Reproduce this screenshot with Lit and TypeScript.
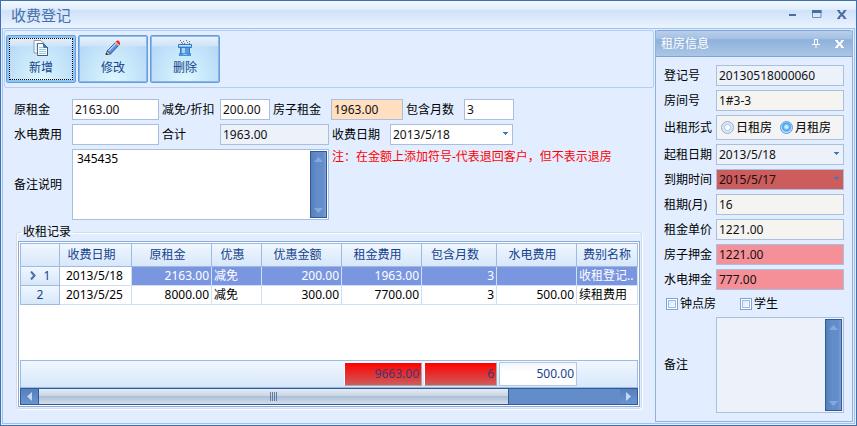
import { LitElement, html, css, svg } from "lit";
import { customElement } from "lit/decorators.js";
import { classMap } from "lit/directives/class-map.js";

interface FeeRecord {
  date: string;
  rent: string;
  kind: string;
  discount: string;
  fee: string;
  months: string;
  utility: string;
  category: string;
}

const records: FeeRecord[] = [
  { date: "2013/5/18", rent: "2163.00", kind: "减免", discount: "200.00", fee: "1963.00", months: "3", utility: "", category: "收租登记.." },
  { date: "2013/5/25", rent: "8000.00", kind: "减免", discount: "300.00", fee: "7700.00", months: "3", utility: "500.00", category: "续租费用" },
];

const columns = ["收费日期", "原租金", "优惠", "优惠金额", "租金费用", "包含月数", "水电费用", "费别名称"];

const addIcon = svg`
  <path d="M1 .5h7l3 3V13H1z" fill="#fff" stroke="#8a9bb5"/>
  <path d="M2.500 4h3M2.500 6h2M2.500 8h2M2.500 10h2" stroke="#9fd3f3"/>
  <path d="M4.500 3.500h6l4 4v8h-10z" fill="#fff" stroke="#5b6b85"/>
  <path d="M9.500 2.500l5 5.500h-4z" fill="#3f6fae"/>
  <path d="M14.500 7v8.500h-10" fill="none" stroke="#44597a"/>
  <path d="M6 7.500h4M6 9.500h7M6 11.500h7M6 13.500h7" stroke="#8ccdf2"/>`;

const editIcon = svg`
  <path d="M2 11L11.500 1.500l3 3L5.500 14z" fill="#5f8fe0" stroke="#34509a"/>
  <path d="M3.500 11L11.500 3" stroke="#b4d0fa" stroke-width="1.500"/>
  <path d="M11 1.500L12.500.5h1l1.500 2v1.500l-1 1z" fill="#f02818"/>
  <path d="M10.500 2l3.500 3.500" stroke="#f4c070" stroke-width="1.200"/>
  <path d="M2 11l-1 3.500h2L5.500 14z" fill="#e8d4b8" stroke="#4c4c58" stroke-width=".8"/>
  <path d="M.8 13h1.700v2H.8z" fill="#333"/>`;

const deleteIcon = svg`
  <path d="M3 .5h1M6 1.500h1M9 .5h1M12 1.500h1M4 2.500h1M7 3.500h1M10 2.500h1M12 3.500h1M5 3.500h1" stroke="#66717f"/>
  <path d="M1.500 4.500h13v3h-13z" fill="#7dbcf3" stroke="#3a78c2"/>
  <path d="M2 5.500h12" stroke="#c3e2fb"/>
  <path d="M3 8h10v5H3z" fill="#5c98e2"/>
  <path d="M3.500 8v5M12.500 8v5" stroke="#3f7ac6"/>
  <path d="M6.500 8v5" stroke="#a7d4fa" stroke-width="3"/>
  <path d="M2 13h12v3H2z" fill="#4c8fdc"/>
  <path d="M6 14.500h4" stroke="#56e4f4"/>`;

const shared = css`
  * {
    box-sizing: border-box;
  }
  button,
  input,
  select,
  textarea {
    font: inherit;
    color: inherit;
    margin: 0;
    outline: none;
  }
  .field {
    height: 21px;
    padding: 0 2px;
    border: 1px solid #a9bfde;
    border-radius: 0;
    background: #fff;
    color: #111;
    min-width: 0;
  }
  .combo {
    position: relative;
    display: flex;
  }
  .combo select {
    flex: 1;
    appearance: none;
  }
  .combo svg {
    position: absolute;
    right: 4px;
    top: 8px;
    pointer-events: none;
  }
  .readonly {
    background: #ecf1fa;
  }
`;

@customElement("memo-box")
export class MemoBox extends LitElement {
  static properties = {
    value: { type: String },
    label: { type: String },
    muted: { type: Boolean, reflect: true },
  };
  declare value: string;
  declare label: string;
  declare muted: boolean;

  constructor() {
    super();
    this.value = "";
    this.label = "";
    this.muted = false;
  }

  static styles = [
    shared,
    css`
      :host {
        display: flex;
        box-sizing: border-box;
        border: 1px solid #a9bfde;
        background: #fff;
        padding: 1px;
      }
      :host([muted]) {
        background: #ecf1fa;
      }
      textarea {
        flex: 1;
        min-width: 0;
        border: 0;
        padding: 0 3px;
        resize: none;
        background: transparent;
        line-height: 16px;
        overflow: hidden;
      }
      .bar {
        width: 17px;
        flex: none;
        display: flex;
        flex-direction: column;
        justify-content: space-between;
        border: 1px solid #2f5b9b;
        background: linear-gradient(90deg, #5580bb, #638dc9 40%, #638dc9 80%, #7ba0d4);
      }
      .bar button {
        height: 14px;
        padding: 0;
        border: 0;
        background: none;
        display: grid;
        place-items: center;
      }
    `,
  ];

  render() {
    return html`
      <textarea aria-label=${this.label} .value=${this.value}></textarea>
      <div class="bar">
        <button aria-label="向上">
          <svg width="9" height="5" viewBox="0 0 9 5"><path d="M0 5L4.500 0 9 5z" fill="#84a9de" /></svg>
        </button>
        <button aria-label="向下">
          <svg width="9" height="5" viewBox="0 0 9 5"><path d="M0 0L4.500 5 9 0z" fill="#84a9de" /></svg>
        </button>
      </div>
    `;
  }
}

@customElement("app-root")
export class AppRoot extends LitElement {
  static styles = [
    shared,
    css`
      :host {
        display: flex;
        flex-direction: column;
        box-sizing: border-box;
        min-height: 100vh;
        border: 1px solid #3f70b0;
        background: #e2eeff;
        color: #000;
        font: 12px/16px "Noto Sans", "Noto Sans CJK SC", sans-serif;
      }
      .titlebar {
        display: flex;
        align-items: center;
        height: 27px;
        padding: 0 9px 0 10px;
        background: linear-gradient(#f2f8ff, #e2eefc 30%, #cfe2f9 36%, #deebfc 70%, #eaf4ff);
      }
      .titlebar h1 {
        flex: 1;
        margin: 0;
        font-size: 15px;
        line-height: 20px;
        font-weight: 400;
        color: #4470ac;
      }
      .caption {
        border: 0;
        padding: 0;
        background: none;
        display: flex;
      }
      .titlebar .caption {
        margin-left: 15px;
      }
      .content {
        flex: 1;
        display: flex;
        gap: 1px;
        margin: 0 1px 1px;
        padding: 1px;
        border: 1px solid #9fc3ee;
      }
      main {
        flex: 1;
        min-width: 0;
        display: flex;
        flex-direction: column;
      }
      .toolbar {
        display: flex;
        gap: 2px;
        padding: 4px 1px;
        border: 1px solid #b3cff3;
        border-radius: 2px;
      }
      .tool {
        width: 70px;
        height: 48px;
        padding: 2px;
        border: 1px solid #669bdc;
        border-radius: 2px;
        box-shadow: inset 0 0 0 1px #8cb7ea;
        color: #15428b;
        background:
          linear-gradient(#e9f3fd, #cfe3f8 22%, transparent 23%),
          radial-gradient(ellipse at 50% 100%, #dcf8ff, #b4d7f6 90%);
      }
      .tool .face {
        display: flex;
        flex-direction: column;
        align-items: center;
        gap: 4px;
        height: 42px;
        padding-top: 1px;
        border: 1px solid transparent;
      }
      .tool.focused {
        box-shadow: inset 0 0 0 2px #8cc5f2;
      }
      .tool.focused .face {
        border: 1px dotted #000;
      }
      .form {
        display: grid;
        gap: 4px;
        padding: 11px 10px 0;
      }
      .row {
        display: flex;
        align-items: center;
        gap: 3px;
      }
      .pair {
        display: flex;
        align-items: center;
      }
      .pair label,
      .pair .caption-text {
        width: 58px;
        flex: none;
      }
      .w50 {
        width: 50px;
      }
      .w72 {
        width: 72px;
      }
      .w87 {
        width: 87px;
      }
      .w109 {
        width: 109px;
      }
      .w123 {
        width: 123px;
      }
      .peach {
        background: #ffdfbf;
      }
      .row.top {
        align-items: flex-start;
      }
      .memo {
        width: 257px;
        height: 71px;
      }
      .note {
        margin: 0;
        color: #f00;
      }
      .records {
        min-width: 0;
        margin: 4px 12px 0;
        padding: 1px;
        border: 1px solid #d2dce8;
        border-radius: 3px;
        box-shadow: inset 1px 1px #fff, 1px 1px #fff;
      }
      .records legend {
        margin-left: 3px;
        padding: 0 2px;
      }
      .grid {
        border: 1px solid #8babd6;
        padding: 1px;
        background: #fff;
      }
      table {
        width: 100%;
        table-layout: fixed;
        border-collapse: separate;
        border-spacing: 0;
      }
      .c40 {
        width: 40px;
      }
      .c50 {
        width: 50px;
      }
      .c72 {
        width: 72px;
      }
      .c75 {
        width: 75px;
      }
      .c80 {
        width: 80px;
      }
      th,
      td {
        padding: 0 2px;
        font-weight: 400;
        white-space: nowrap;
        overflow: hidden;
        border: solid #cfe0f5;
        border-width: 0 1px 1px 0;
      }
      th {
        color: #15428b;
        text-align: center;
        border-color: #9ebbdf;
        background: linear-gradient(#f0f7ff, #d7e7fa);
      }
      thead th {
        height: 24px;
        border-top-width: 1px;
        padding-right: 10px;
      }
      thead th:last-child {
        padding-right: 2px;
      }
      th:first-child {
        border-left-width: 1px;
      }
      tbody th,
      tbody td {
        height: 19px;
        line-height: 18px;
      }
      .num {
        text-align: right;
      }
      .day {
        padding-left: 6px;
      }
      .selected td {
        color: #fff;
        background: #7b96e0;
      }
      .selected .day {
        color: #000;
        background: #fff;
      }
      .pointer {
        margin-right: 8px;
      }
      .blank td {
        height: 55px;
        border: 0;
      }
      tfoot td {
        height: 28px;
        padding: 1px 0 1px 2px;
        border: solid #9ebbdf;
        border-width: 1px 0;
        background: linear-gradient(#f0f7ff, #d7e7fa);
      }
      tfoot td:first-child {
        border-left-width: 1px;
      }
      tfoot td:last-child {
        border-right-width: 1px;
      }
      .sum {
        display: block;
        padding: 3px 2px;
        text-align: right;
        color: #15428b;
        border: 1px solid #b3c6e2;
        background: linear-gradient(#f0f5fc, #fff 40%);
      }
      .sum.red {
        color: #3a3a78;
        border-color: #fff #a8a8a8 #a8a8a8 #fff;
        background: linear-gradient(#f00, #cd5c5c);
      }
      .scroll {
        display: flex;
        height: 17px;
        border: 1px solid #2f5b9b;
        background: #638dc9;
      }
      .scroll button {
        width: 17px;
        padding: 0;
        border: 0;
        background: linear-gradient(#5580bb, #6b95cf);
        display: grid;
        place-items: center;
      }
      .track {
        flex: 1;
        display: flex;
      }
      .thumb {
        width: 81%;
        display: grid;
        place-items: center;
        border: solid #2f5b9b;
        border-width: 0 1px;
        background: linear-gradient(#e4ebf3, #cbd6e4 45%, #adc0d9 50%, #d3deea);
      }
      aside {
        width: 198px;
        flex: none;
        display: flex;
        flex-direction: column;
        border: 1px solid #8fb2dd;
        border-top: 0;
      }
      .panel-head {
        display: flex;
        align-items: center;
        gap: 15px;
        height: 27px;
        padding: 0 8px 0 5px;
        border-top: 1px solid #7fa5d5;
        border-bottom: 1px solid #7fa5d5;
        border-radius: 2px 2px 0 0;
        background: linear-gradient(#b9cfea, #a4c1e4 30%, #8eb0da 35%, #abc7e7);
      }
      .panel-head h2 {
        flex: 1;
        margin: 0;
        font-size: 12px;
        font-weight: 400;
        color: #fff;
      }
      .details {
        display: grid;
        grid-template-columns: 48px minmax(0, 1fr);
        gap: 4px;
        padding: 8px 8px 0;
        align-items: center;
      }
      .details .field {
        width: 100%;
      }
      .cream {
        background: #f5f4f0;
      }
      .pink {
        background: #f69098;
      }
      .crimson {
        background: #cd5c5c;
      }
      .radios {
        display: flex;
        align-items: center;
        gap: 8px;
        height: 25px;
        margin: 0;
        padding: 0 4px;
        border: 1px solid #a9bfde;
        background: #f4f4f4;
      }
      .choice {
        display: flex;
        align-items: center;
        gap: 2px;
        white-space: nowrap;
      }
      .choice input {
        appearance: none;
        flex: none;
        width: 12px;
        height: 12px;
        border: 1px solid #79a4dc;
      }
      .choice input[type="radio"] {
        width: 13px;
        height: 13px;
        border-color: #93abc9;
        border-radius: 50%;
        background: radial-gradient(circle, #fff 25%, #b7cff0 35%, #e2edfb 65%);
      }
      .choice input[type="radio"]:checked {
        border-color: #5a9be0;
        background: radial-gradient(circle at 50% 45%, #c9f1ff 15%, #3b9cf0 45%, #c5e2fa 65%);
      }
      .choice input[type="checkbox"] {
        background: linear-gradient(135deg, #d7e3f3, #fff);
        box-shadow: inset 0 0 0 1px #fff, inset 0 0 0 2px #9dbbe2;
      }
      .checks {
        grid-column: 1 / -1;
        display: grid;
        grid-template-columns: 74px 1fr;
        height: 19px;
        padding-left: 2px;
        align-items: center;
      }
      .side-memo {
        height: 96px;
      }
    `,
  ];

  private arrow() {
    return html`<svg width="7" height="5" viewBox="0 0 7 5"><path d="M1 0h5v1H5v1H4v1H3V2H2V1H1z" fill="#3f7ab8" /></svg>`;
  }

  private tool(label: string, icon: unknown, focused = false) {
    return html`<button class=${classMap({ tool: true, focused })}>
      <span class="face"><svg width="16" height="16" viewBox="0 0 16 16" fill="none">${icon}</svg>${label}</span>
    </button>`;
  }

  private text(id: string, label: string, value: string, cls: string) {
    return html`<div class="pair"><label for=${id}>${label}</label><input id=${id} class="field ${cls}" .value=${value} /></div>`;
  }

  private detail(id: string, label: string, value: string, cls: string) {
    return html`<label for=${id}>${label}</label><input id=${id} class="field ${cls}" .value=${value} />`;
  }

  private detailDate(id: string, label: string, value: string, cls: string) {
    return html`<label for=${id}>${label}</label>
      <span class="combo"><select id=${id} class="field ${cls}"><option>${value}</option></select>${this.arrow()}</span>`;
  }

  private record(r: FeeRecord, i: number) {
    return html`<tr class=${classMap({ selected: i === 0 })}>
      <th scope="row">${i === 0
        ? html`<svg class="pointer" width="6" height="9" viewBox="0 0 6 9"><path d="M1 .5l3.500 4L1 8.500" fill="none" stroke="#4a6da3" stroke-width="2" /></svg>`
        : ""}${i + 1}</th>
      <td class="day">${r.date}</td>
      <td class="num">${r.rent}</td>
      <td>${r.kind}</td>
      <td class="num">${r.discount}</td>
      <td class="num">${r.fee}</td>
      <td class="num">${r.months}</td>
      <td class="num">${r.utility}</td>
      <td>${r.category}</td>
    </tr>`;
  }

  render() {
    return html`
      <header class="titlebar">
        <h1>收费登记</h1>
        <button class="caption" aria-label="最小化">
          <svg width="9" height="9" viewBox="0 0 9 9"><path d="M1 4h7v2H1z" fill="#4a6da3" /></svg>
        </button>
        <button class="caption" aria-label="最大化">
          <svg width="10" height="9" viewBox="0 0 10 9"><path d="M.5.500h8.500v7H.5z" fill="none" stroke="#6f8fbe" /><path d="M0 0h9.500v3H0z" fill="#4a6da3" /></svg>
        </button>
        <button class="caption" aria-label="关闭">
          <svg width="10" height="9" viewBox="0 0 10 9"><path d="M1.500 1l6.500 7M8 1L1.500 8" stroke="#4a6da3" stroke-width="2" /><path d="M0 .5h3M6.500.5h3M0 8.500h3M6.500 8.500h3" stroke="#4a6da3" /></svg>
        </button>
      </header>
      <div class="content">
        <main>
          <div class="toolbar">
            ${this.tool("新增", addIcon, true)} ${this.tool("修改", editIcon)} ${this.tool("删除", deleteIcon)}
          </div>
          <form class="form">
            <div class="row">
              ${this.text("rent", "原租金", "2163.00", "w87")}
              ${this.text("discount", "减免/折扣", "200.00", "w50")}
              ${this.text("roomRent", "房子租金", "1963.00", "w72 peach")}
              ${this.text("months", "包含月数", "3", "w50")}
            </div>
            <div class="row">
              ${this.text("utility", "水电费用", "", "w87")}
              ${this.text("total", "合计", "1963.00", "w109 readonly")}
              <div class="pair">
                <label for="payDate">收费日期</label>
                <span class="combo w123"><select id="payDate" class="field"><option>2013/5/18</option></select>${this.arrow()}</span>
              </div>
            </div>
            <div class="row top">
              <div class="pair">
                <span class="caption-text">备注说明</span>
                <memo-box class="memo" label="备注说明" value="345435"></memo-box>
              </div>
              <p class="note">注：在金额上添加符号-代表退回客户，但不表示退房</p>
            </div>
          </form>
          <fieldset class="records">
            <legend>收租记录</legend>
            <div class="grid">
              <table>
                <colgroup>
                  <col class="c40" /><col class="c72" /><col class="c80" /><col class="c50" /><col class="c80" />
                  <col class="c80" /><col class="c75" /><col class="c80" /><col />
                </colgroup>
                <thead>
                  <tr><th></th>${columns.map((c) => html`<th scope="col">${c}</th>`)}</tr>
                </thead>
                <tbody>
                  ${records.map((r, i) => this.record(r, i))}
                  <tr class="blank"><td colspan="9"></td></tr>
                </tbody>
                <tfoot>
                  <tr>
                    <td colspan="5"></td>
                    <td><span class="sum red">9663.00</span></td>
                    <td><span class="sum red">6</span></td>
                    <td><span class="sum">500.00</span></td>
                    <td></td>
                  </tr>
                </tfoot>
              </table>
              <div class="scroll">
                <button aria-label="向左"><svg width="5" height="9" viewBox="0 0 5 9"><path d="M5 0v9L0 4.500z" fill="#c4d8f3" /></svg></button>
                <div class="track">
                  <div class="thumb"><svg width="8" height="9" viewBox="0 0 8 9"><path d="M.5 0v9M2.500 0v9M4.500 0v9M6.500 0v9" stroke="#5f7ba6" /></svg></div>
                </div>
                <button aria-label="向右"><svg width="5" height="9" viewBox="0 0 5 9"><path d="M0 0v9L5 4.500z" fill="#c4d8f3" /></svg></button>
              </div>
            </div>
          </fieldset>
        </main>
        <aside>
          <header class="panel-head">
            <h2>租房信息</h2>
            <button class="caption" aria-label="固定">
              <svg width="8" height="9" viewBox="0 0 8 9"><path d="M2.500 5V.500h3V5M0 5.500h8M4 6v3" fill="none" stroke="#fff" /><path d="M5 0h1v5H5z" fill="#fff" /></svg>
            </button>
            <button class="caption" aria-label="关闭面板">
              <svg width="9" height="8" viewBox="0 0 9 8"><path d="M1.500 1l6 6M7.500 1l-6 6" stroke="#fff" stroke-width="2" /><path d="M0 .5h3M6 .5h3M0 7.500h3M6 7.500h3" stroke="#fff" /></svg>
            </button>
          </header>
          <form class="details">
            ${this.detail("regNo", "登记号", "20130518000060", "readonly")}
            ${this.detail("roomNo", "房间号", "1#3-3", "cream")}
            <span id="modeLabel">出租形式</span>
            <div class="radios" role="radiogroup" aria-labelledby="modeLabel">
              <label class="choice"><input type="radio" name="mode" />日租房</label>
              <label class="choice"><input type="radio" name="mode" checked />月租房</label>
            </div>
            ${this.detailDate("startDate", "起租日期", "2013/5/18", "readonly")}
            ${this.detailDate("endDate", "到期时间", "2015/5/17", "crimson")}
            ${this.detail("term", "租期(月)", "16", "cream")}
            ${this.detail("price", "租金单价", "1221.00", "cream")}
            ${this.detail("roomDeposit", "房子押金", "1221.00", "pink")}
            ${this.detail("utilityDeposit", "水电押金", "777.00", "pink")}
            <div class="checks">
              <label class="choice"><input type="checkbox" />钟点房</label>
              <label class="choice"><input type="checkbox" />学生</label>
            </div>
            <span>备注</span>
            <memo-box class="side-memo" label="备注" muted></memo-box>
          </form>
        </aside>
      </div>
    `;
  }
}
